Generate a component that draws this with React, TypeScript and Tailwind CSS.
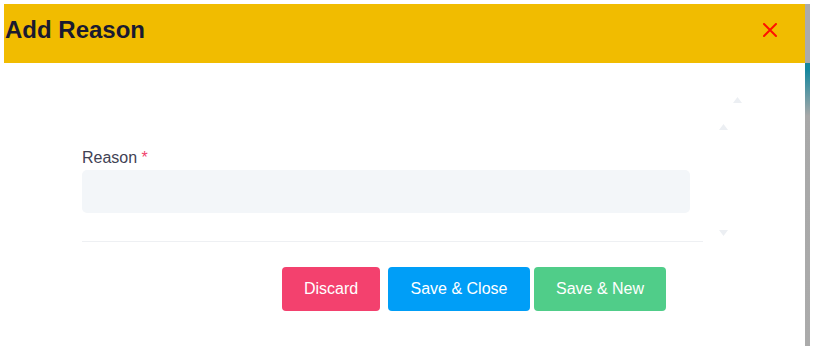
function Arrow({ up }: { up: boolean }) {
  return (
    <svg width="9" height="6" viewBox="0 0 9 6" className="block">
      <path d={up ? "M4.5 0L9 6H0Z" : "M0 0H9L4.5 6Z"} fill="#eceff3" />
    </svg>
  );
}

export default function App() {
  return (
    <div className="w-[814px] h-[346px] bg-white flex pt-1 pl-1 overflow-hidden font-['Liberation_Sans',Arial,sans-serif]">
      <div className="w-[801px] flex flex-col">
        {/* Header */}
        <div className="h-[59px] bg-[#f1bc00] flex items-start justify-between pt-[12px] pl-[1px] pr-[28px]">
          <h2 className="text-[24px] leading-[28px] font-bold text-[#1a1a30]">Add Reason</h2>
          <button className="mt-[7px]">
            <svg width="14" height="14" viewBox="0 0 14 14" className="block">
              <path d="M1 1L13 13M13 1L1 13" stroke="#ff1200" strokeWidth="2" strokeLinecap="round" />
            </svg>
          </button>
        </div>

        {/* Body */}
        <div className="relative flex-1">
          <div className="absolute left-[729px] top-[34px]"><Arrow up /></div>
          <div className="absolute left-[715px] top-[61px]"><Arrow up /></div>
          <div className="absolute left-[715px] top-[167px]"><Arrow up={false} /></div>

          <div className="pl-[78px] pt-[83px] w-[699px]">
            <label className="block text-[16px] leading-[24px] text-[#3f4254]">
              Reason <span className="text-[#f1416c]">*</span>
            </label>
            <input className="block w-[608px] h-[43px] rounded-[5px] bg-[#f3f6f9] outline-none px-4" />
            <div className="mt-[28px] h-px w-[621px] bg-[#eef0f3]" />
            <div className="flex mt-[25px] ml-[200px]">
              <button className="w-[98px] h-[44px] rounded-[4px] bg-[#f3416e] text-white text-[16px]">Discard</button>
              <button className="ml-2 w-[142px] h-[44px] rounded-[4px] bg-[#009ef7] text-white text-[16px]">Save &amp; Close</button>
              <button className="ml-1 w-[132px] h-[44px] rounded-[4px] bg-[#50cd89] text-white text-[16px]">Save &amp; New</button>
            </div>
          </div>
        </div>
      </div>
      {/* Scrollbar */}
      <div className="w-[5px] h-[342px] bg-[linear-gradient(to_bottom,#ababab_0px,#ababab_59px,#15879e_59px,#15879e_66px,#a8a8a8_112px,#ababab_342px)]" />
    </div>
  );
}
